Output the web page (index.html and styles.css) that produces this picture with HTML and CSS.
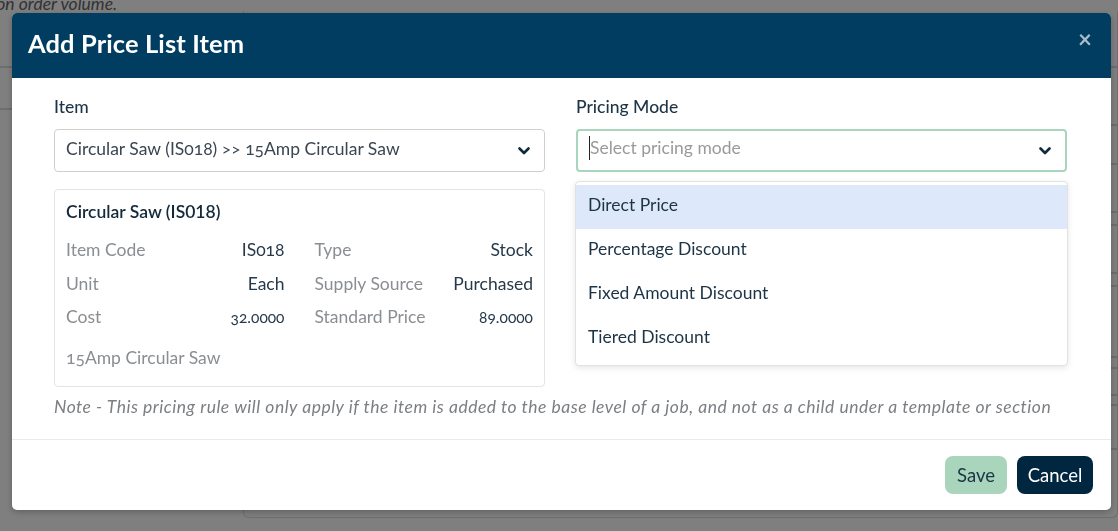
FILE: index.html
```html
<!DOCTYPE html>
<html lang="en">
<head>
    <meta charset="UTF-8">
    <meta name="viewport" content="width=device-width, initial-scale=1.0">
    <title>Add Price List Item</title>
    <link rel="stylesheet" href="styles.css">
</head>
<body>
    <!-- page behind the dialog -->
    <div class="page">
        <p class="page-note">Discounts apply based on order volume.</p>
        <div class="page-grid">
            <div class="page-side">
                <div></div>
                <div></div>
            </div>
            <div class="page-table">
                <div></div><div></div><div></div><div></div><div></div>
                <div></div><div></div><div></div><div></div><div></div>
                <div></div><div></div><div></div>
            </div>
        </div>
    </div>

    <div class="overlay"></div>

    <div class="modal">
        <div class="modal-header">
            <h2>Add Price List Item</h2>
            <span class="close">&times;</span>
        </div>

        <div class="modal-body">
            <div class="form-cols">
                <div class="form-group">
                    <label>Item</label>
                    <div class="select">
                        <span class="select-value">Circular Saw (IS018) &gt;&gt; 15Amp Circular Saw</span>
                        <svg class="chevron" viewBox="0 0 12 8" width="12" height="8"><polyline points="1.5,1.5 6,6 10.5,1.5" /></svg>
                    </div>

                    <div class="item-card">
                        <div class="item-title">Circular Saw (IS018)</div>
                        <div class="spec-grid">
                            <div class="spec"><span class="spec-label">Item Code</span><span class="spec-value">IS018</span></div>
                            <div class="spec"><span class="spec-label">Type</span><span class="spec-value">Stock</span></div>
                            <div class="spec"><span class="spec-label">Unit</span><span class="spec-value">Each</span></div>
                            <div class="spec"><span class="spec-label">Supply Source</span><span class="spec-value">Purchased</span></div>
                            <div class="spec"><span class="spec-label">Cost</span><span class="spec-value num">32.0000</span></div>
                            <div class="spec"><span class="spec-label">Standard Price</span><span class="spec-value num">89.0000</span></div>
                        </div>
                        <div class="item-desc">15Amp Circular Saw</div>
                    </div>
                </div>

                <div class="form-group">
                    <label>Pricing Mode</label>
                    <div class="select-wrap">
                        <div class="select focused">
                            <span class="placeholder">Select pricing mode</span>
                            <svg class="chevron" viewBox="0 0 12 8" width="12" height="8"><polyline points="1.5,1.5 6,6 10.5,1.5" /></svg>
                        </div>
                        <ul class="menu">
                            <li class="active">Direct Price</li>
                            <li>Percentage Discount</li>
                            <li>Fixed Amount Discount</li>
                            <li>Tiered Discount</li>
                        </ul>
                    </div>
                </div>
            </div>

            <p class="note">Note - This pricing rule will only apply if the item is added to the base level of a job, and not as a child under a template or section</p>
        </div>

        <div class="modal-footer">
            <button class="btn btn-save">Save</button>
            <button class="btn btn-cancel">Cancel</button>
        </div>
    </div>
</body>
</html>
```

FILE: styles.css
```css
* {
    margin: 0;
    padding: 0;
    box-sizing: border-box;
}

body {
    font-family: Lato, "Open Sans", sans-serif;
    font-size: 17.5px;
    background: #fff;
    color: #1d3446;
    height: 100vh;
    overflow: hidden;
}

/* background page */

.page-note {
    margin-top: -8px;
    font-style: italic;
    color: #666;
    line-height: 24px;
    margin-left: -170px;
    height: 19px;
}

.page-grid {
    display: grid;
    grid-template-columns: 243px 1fr;
}

.page-side div {
    border-bottom: 2px solid #dcdcdc;
}

.page-side div:nth-child(1) { height: 57px; }
.page-side div:nth-child(2) { height: 42px; }

.page-table {
    border: 1px solid #dcdcdc;
    border-top: none;
    border-radius: 0 0 6px 6px;
    height: 507px;
}

.page-table div {
    border-bottom: 2px solid #dcdcdc;
}

.page-table div:nth-child(1) { height: 57px; }
.page-table div:nth-child(2) { height: 58px; }
.page-table div:nth-child(3) { height: 39px; }
.page-table div:nth-child(4) { height: 48px; }
.page-table div:nth-child(5) { height: 13px; }
.page-table div:nth-child(6) { height: 48px; }
.page-table div:nth-child(7) { height: 13px; }
.page-table div:nth-child(8) { height: 71px; }
.page-table div:nth-child(9) { height: 11px; }
.page-table div:nth-child(10) { height: 27px; }
.page-table div:nth-child(11) { height: 10px; }
.page-table div:nth-child(12) { height: 44px; }
.page-table div:nth-child(13) { height: 12px; border-bottom: none; }

.overlay {
    position: fixed;
    inset: 0;
    background-color: rgba(0, 0, 0, 0.5);
}

/* dialog */

.modal {
    position: fixed;
    top: 13px;
    left: 12px;
    width: 1099px;
    background: #fff;
    border-radius: 5px;
    box-shadow: 0 2px 6px rgba(0, 0, 0, 0.25);
}

.modal-header {
    height: 65px;
    background-color: #013c61;
    border-radius: 5px 5px 0 0;
    display: flex;
    align-items: center;
    justify-content: space-between;
    padding: 0 19px 0 16px;
}

.modal-header h2 {
    color: #fff;
    font-size: 25.5px;
    font-weight: 700;
    letter-spacing: 0.1px;
    margin-top: -6px;
}

.close {
    color: #a7bccb;
    font-size: 24px;
    font-weight: 700;
    line-height: 1;
    margin-top: -14px;
}

.modal-body {
    padding: 16px 44px 20px 42px;
}

.form-cols {
    display: grid;
    grid-template-columns: 1fr 1fr;
    column-gap: 31px;
}

.form-group label {
    display: block;
    line-height: 24px;
    margin-bottom: 11px;
    padding-top: 1px;
    height: 24px;
    color: #1d3446;
    font-weight: 500;
}

.select {
    height: 43px;
    border: 1.5px solid #cfcfcf;
    border-radius: 4px;
    display: flex;
    align-items: center;
    justify-content: space-between;
    padding: 0 14px 5px 11px;
    color: #3b4651;
}

.select.focused {
    border: 2px solid #a8d6bd;
}

.chevron {
    fill: none;
    stroke: #102a3d;
    stroke-width: 2.6;
    stroke-linecap: round;
    stroke-linejoin: round;
    margin-top: 6px;
}

.placeholder {
    color: #9a9a9a;
    border-left: 1px solid #222;
    line-height: 24px;
}

.select-wrap {
    position: relative;
}

.menu {
    position: absolute;
    top: 52px;
    left: -1px;
    right: -1px;
    list-style: none;
    background: #fff;
    border: 1px solid #e2e2e2;
    border-radius: 4px;
    padding: 3px 0 4px;
    box-shadow: 0 2px 6px rgba(0, 0, 0, 0.1);
}

.menu li {
    height: 44px;
    line-height: 40px;
    padding: 0 12px;
    color: #1d3446;
}

.menu li.active {
    background-color: #dde9fb;
}

/* item summary */

.item-card {
    margin-top: 17px;
    border: 1px solid #e4e4e4;
    border-radius: 4px;
    padding: 10px 11px 16px;
}

.item-title {
    line-height: 24px;
    font-weight: 600;
    color: #14293a;
}

.spec-grid {
    margin-top: 9px;
    display: grid;
    grid-template-columns: 1fr 1fr;
    column-gap: 30px;
}

.spec {
    display: flex;
    justify-content: space-between;
    align-items: baseline;
    line-height: 33.5px;
}

.spec-label {
    color: #8a8e92;
}

.spec-value {
    color: #26394a;
    font-variant-numeric: oldstyle-nums;
}

.spec-value.num {
    font-size: 15.5px;
}

.item-desc {
    margin-top: 11px;
    line-height: 24px;
    color: #8a8e92;
    font-variant-numeric: oldstyle-nums;
}

.select-value {
    font-variant-numeric: oldstyle-nums;
}

.note {
    margin-top: 8px;
    line-height: 24px;
    font-style: italic;
    letter-spacing: 0.5px;
    color: #7b7f83;
}

.modal-footer {
    border-top: 1px solid #e8eaec;
    display: flex;
    justify-content: flex-end;
    gap: 10px;
    padding: 16px 18px 16px;
}

.btn {
    height: 38px;
    border: none;
    border-radius: 8px;
    font-family: inherit;
    font-size: 18.5px;
    padding: 0 10px;
    cursor: pointer;
}

.btn-save {
    background-color: #a8d5bb;
    color: #1d3446;
    width: 62px;
}

.btn-cancel {
    background-color: #01263f;
    color: #fff;
    width: 76px;
}
```
